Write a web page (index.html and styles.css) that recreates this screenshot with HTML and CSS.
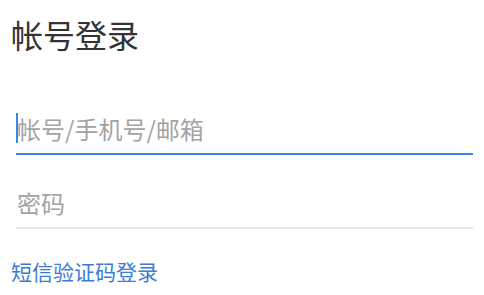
FILE: index.html
```html
<!DOCTYPE html>
<html lang="zh-CN">
<head>
<meta charset="utf-8">
<title>帐号登录</title>
<link rel="stylesheet" href="styles.css">
</head>
<body>
<main class="login">
  <h1 class="title">帐号登录</h1>
  <div class="field field-active">
    <span class="caret"></span>
    <input class="input" type="text" placeholder="帐号/手机号/邮箱">
  </div>
  <div class="field">
    <input class="input" type="password" placeholder="密码">
  </div>
  <a class="sms-link" href="#">短信验证码登录</a>
</main>
</body>
</html>
```
FILE: styles.css
```css
html, body {
  margin: 0;
  padding: 0;
  background: #ffffff;
}
body {
  font-family: "Noto Sans CJK SC", "Noto Sans", sans-serif;
}
.login {
  display: flex;
  flex-direction: column;
  padding: 17px 11px 0 11px;
}
.title {
  margin: 0 0 52px 0;
  font-size: 32px;
  line-height: 34px;
  font-weight: 400;
  color: #333333;
}
.field {
  position: relative;
  margin-left: 5px;
  border-bottom: 2px solid #e8e8e8;
}
.field + .field {
  margin-top: 22px;
}
.field-active {
  border-bottom-color: #3d86e0;
}
.input {
  display: block;
  box-sizing: border-box;
  width: 100%;
  height: 50px;
  margin: 0;
  padding: 0 0 0 1px;
  border: 0;
  outline: none;
  background: transparent;
  font-family: inherit;
  font-size: 24px;
  color: #333333;
}
.input::placeholder {
  color: #a3a3a3;
}
.caret {
  position: absolute;
  left: 0;
  top: 10px;
  width: 2px;
  height: 30px;
  background: #3d86e0;
}
.sms-link {
  align-self: flex-start;
  margin-top: 30px;
  font-size: 21px;
  line-height: 24px;
  color: #3b7bd4;
  text-decoration: none;
}
```
